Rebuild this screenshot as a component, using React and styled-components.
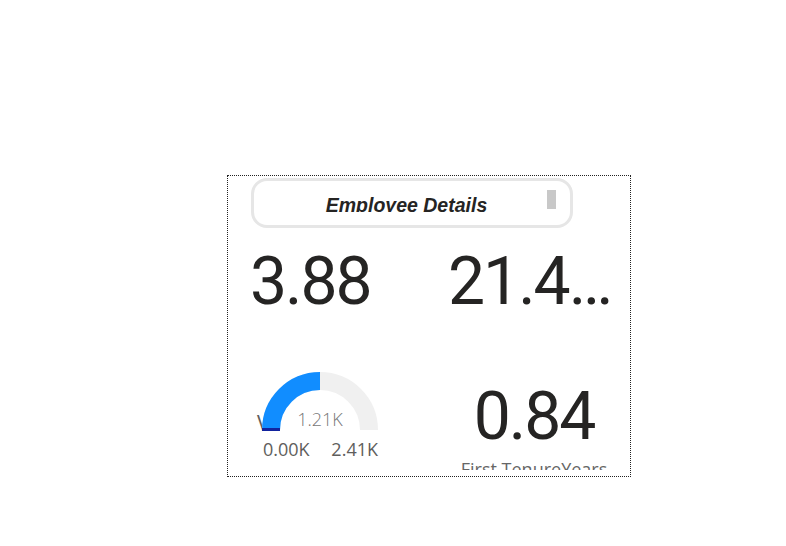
import React from 'react'
import styled, { createGlobalStyle } from 'styled-components'

const GlobalStyle = createGlobalStyle`
    html, body {
        margin: 0;
        padding: 0;
        background: #ffffff;
    }
    body {
        font-family: "Open Sans", "Liberation Sans", sans-serif;
    }
`

export default function App() {
    return (
        <Page>
            <GlobalStyle />
            <Visual>
                <Content>
                    <TitleBar>
                        <TitleClip>
                            <TitleText>Employee Details</TitleText>
                        </TitleClip>
                        <ScrollThumb />
                    </TitleBar>

                    <Cards>
                        <CardCell>
                            <BigNumber>3.88</BigNumber>
                        </CardCell>
                        <CardCell>
                            <BigNumber>21.4…</BigNumber>
                        </CardCell>

                        <GaugeCell>
                            <Gauge value={1205} max={2410} />
                        </GaugeCell>
                        <CardCell $centered>
                            <BigNumber $top={14}>0.84</BigNumber>
                            <CardLabel>First TenureYears</CardLabel>
                        </CardCell>
                    </Cards>
                </Content>
            </Visual>
        </Page>
    )
}

function Gauge({ value, max }) {
    const cx = 63
    const cy = 60
    const r = 49
    const angle = Math.PI * (1 - value / max)
    const ex = cx + r * Math.cos(angle)
    const ey = cy - r * Math.sin(angle)

    return (
        <GaugeWrap>
            <HiddenTitle>V</HiddenTitle>
            <GaugeSvg width="130" height="62" viewBox="0 0 130 62">
                <path
                    d={`M ${cx - r} ${cy} A ${r} ${r} 0 0 1 ${cx + r} ${cy}`}
                    fill="none"
                    stroke="#f0f0f0"
                    strokeWidth="18"
                />
                <path
                    d={`M ${cx - r} ${cy} A ${r} ${r} 0 0 1 ${ex} ${ey}`}
                    fill="none"
                    stroke="#118dff"
                    strokeWidth="18"
                />
                <rect x={cx - r - 9} y={cy - 2} width="18" height="3" fill="#12239e" />
            </GaugeSvg>
            <CenterValue>1.21K</CenterValue>
            <GaugeScale>
                <span>0.00K</span>
                <span>2.41K</span>
            </GaugeScale>
        </GaugeWrap>
    )
}

const Page = styled.div`
    padding: 175px 0 0 227px;
    width: 786px;
    height: 546px;
    box-sizing: border-box;
`
const Visual = styled.div`
    width: 404px;
    height: 302px;
    box-sizing: border-box;
    border: 1px dotted #222222;
`
const Content = styled.div`
    height: 294px;
    overflow: hidden;
`
const TitleBar = styled.div`
    display: flex;
    align-items: flex-start;
    width: 322px;
    height: 50px;
    margin: 2px 0 0 23px;
    box-sizing: border-box;
    border: 3px solid #e6e6e6;
    border-radius: 16px;
    background: #ffffff;
`
const TitleClip = styled.div`
    flex: 1;
    height: 31px;
    padding-left: 12px;
    overflow: hidden;
    text-align: center;
`
const TitleText = styled.div`
    padding-top: 9px;
    font-family: "Liberation Sans", Arial, sans-serif;
    font-size: 19.5px;
    line-height: 30px;
    font-weight: 700;
    font-style: italic;
    color: #252423;
    white-space: nowrap;
`
const ScrollThumb = styled.div`
    width: 9px;
    height: 19px;
    margin: 9px 14px 0 0;
    background: #c8c8c8;
`
const Cards = styled.div`
    display: grid;
    grid-template-columns: 198px 1fr;
    grid-template-rows: 121px 1fr;
    margin-top: 21px;
    padding-left: 22px;
`
const CardCell = styled.div`
    display: flex;
    flex-direction: column;
    align-items: ${p => (p.$centered ? 'center' : 'flex-start')};
    padding-right: ${p => (p.$centered ? '10px' : '0')};
`
const BigNumber = styled.div`
    margin-top: ${p => p.$top || 0}px;
    font-family: Roboto, "DejaVu Sans", sans-serif;
    font-size: 66px;
    line-height: 66px;
    letter-spacing: -2px;
    color: #252423;
    white-space: nowrap;
`
const CardLabel = styled.div`
    margin-top: 7px;
    font-family: "Open Sans", "Liberation Sans", sans-serif;
    font-size: 18px;
    line-height: 24px;
    color: #666666;
    white-space: nowrap;
`
const GaugeCell = styled.div`
    display: flex;
    padding-left: 7px;
`
const GaugeWrap = styled.div`
    position: relative;
    width: 130px;
`
const GaugeSvg = styled.svg`
    position: relative;
    display: block;
    z-index: 1;
`
const HiddenTitle = styled.span`
    position: absolute;
    left: 0;
    top: 41px;
    font-family: "Open Sans", sans-serif;
    font-size: 21px;
    line-height: 24px;
    color: #605e5c;
`
const CenterValue = styled.span`
    position: absolute;
    left: 0;
    width: 126px;
    top: 37px;
    z-index: 2;
    text-align: center;
    font-family: "Open Sans", sans-serif;
    font-weight: 300;
    font-size: 18px;
    line-height: 24px;
    color: #777777;
`
const GaugeScale = styled.div`
    display: flex;
    justify-content: space-between;
    width: 115px;
    margin: 5px 0 0 6px;
    font-family: "Open Sans", sans-serif;
    font-size: 18px;
    line-height: 24px;
    color: #605e5c;
`
